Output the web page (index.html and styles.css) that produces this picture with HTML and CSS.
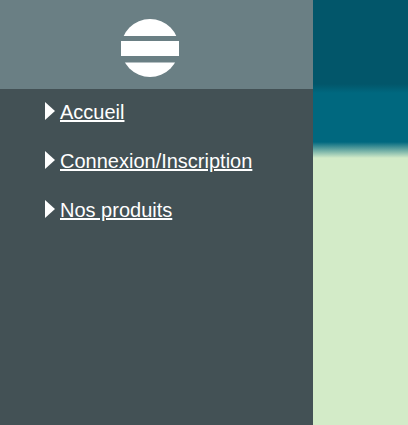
FILE: index.html
```html
<!DOCTYPE html>
<html lang="fr">
<head>
<meta charset="utf-8">
<link rel="stylesheet" href="styles.css">
</head>
<body>
<div class="layout">
  <aside class="sidebar">
    <div class="sidebar-head">
      <svg class="logo" width="58" height="58" viewBox="0 0 58 58">
        <defs>
          <clipPath id="c"><circle cx="29" cy="29" r="29"/></clipPath>
        </defs>
        <g clip-path="url(#c)" fill="#fff">
          <rect x="0" y="0" width="58" height="17"/>
          <rect x="0" y="43.5" width="58" height="15"/>
        </g>
        <rect x="0" y="22" width="58" height="15" fill="#fff"/>
      </svg>
    </div>
    <ul class="nav">
      <li class="nav-item"><a href="#">Accueil</a></li>
      <li class="nav-item"><a href="#">Connexion/Inscription</a></li>
      <li class="nav-item"><a href="#">Nos produits</a></li>
    </ul>
  </aside>
  <main class="content"></main>
</div>
</body>
</html>
```

FILE: styles.css
```css
html, body {
  margin: 0;
  padding: 0;
  height: 100%;
}
body {
  font-family: "Liberation Sans", Arial, sans-serif;
}
.layout {
  display: flex;
  height: 425px;
}
.sidebar {
  width: 313px;
  flex: 0 0 313px;
  background: #435155;
  display: flex;
  flex-direction: column;
}
.sidebar-head {
  height: 89px;
  background: #6a7f84;
  display: flex;
  justify-content: center;
  align-items: flex-start;
  padding: 19px 13px 0 0;
  box-sizing: border-box;
}
.logo {
  display: block;
}
.nav {
  list-style: none;
  margin: 0;
  padding: 12px 0 0 45px;
  display: flex;
  flex-direction: column;
  gap: 26px;
}
.nav-item {
  display: flex;
  align-items: center;
  font-size: 20px;
  line-height: 23px;
}
.nav-item::before {
  content: "";
  width: 0;
  height: 0;
  border-top: 9px solid transparent;
  border-bottom: 9px solid transparent;
  border-left: 10px solid #fff;
  margin-right: 5px;
  margin-top: -4px;
}
.nav-item a {
  color: #fff;
  text-decoration: underline;
}
.content {
  flex: 1;
  background: linear-gradient(to bottom,
    #02566a 0, #02566a 84px,
    #00687f 93px, #00687f 142px,
    #d3ebc8 158px, #d3ebc8 100%);
}
```
